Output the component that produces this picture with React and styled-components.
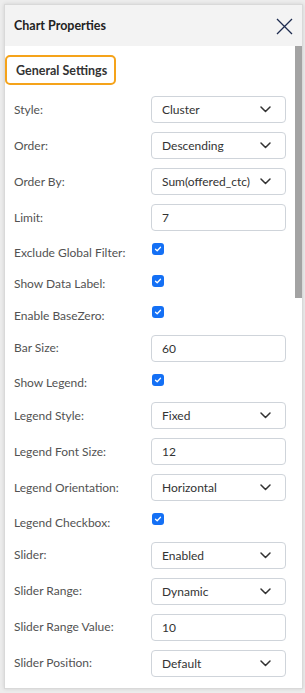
import React from 'react';
import styled, { createGlobalStyle } from 'styled-components';

const GlobalStyle = createGlobalStyle`
  html, body {
    margin: 0;
    padding: 0;
    background: #ededed;
    font-family: Lato, "Open Sans", sans-serif;
  }
`;

const Page = styled.div`
  padding: 4px 2px 4px 4px;
  height: 693px;
  box-sizing: border-box;
`;

const Panel = styled.div`
  display: flex;
  flex-direction: column;
  height: 100%;
  background: #fff;
  border: 1px solid #d9d9d9;
  box-shadow: 0 0 4px rgba(0, 0, 0, 0.12);
  box-sizing: border-box;
`;

const Header = styled.div`
  display: flex;
  align-items: center;
  justify-content: space-between;
  height: 41px;
  flex: 0 0 41px;
  padding: 0 9px 0 9px;
  background: #f3f3f3;
`;

const Title = styled.h1`
  margin: 0;
  font-size: 12.5px;
  font-weight: 700;
  color: #222;
`;

const CloseButton = styled.button`
  display: flex;
  align-items: center;
  justify-content: center;
  width: 18px;
  height: 18px;
  padding: 0;
  border: none;
  background: none;
  margin-top: 1px;
`;

const Main = styled.div`
  flex: 1;
  display: flex;
  min-height: 0;
`;

const Body = styled.div`
  flex: 1;
  overflow: hidden;
  padding-top: 9px;
`;

const ScrollRail = styled.div`
  flex: 0 0 7px;
  display: flex;
  flex-direction: column;
  background: #fff;
`;

const ScrollThumb = styled.div`
  height: 252px;
  background: #a3a3a3;
`;

const SectionTab = styled.div`
  display: inline-flex;
  align-items: center;
  height: 30px;
  padding: 0 7px 0 9px;
  border: 2px solid #f5a31a;
  border-radius: 5px;
  box-sizing: border-box;
  font-size: 12.5px;
  font-weight: 700;
  color: #333;
  margin-bottom: 11px;
`;

const Rows = styled.div`
  display: flex;
  flex-direction: column;
  gap: 9px;
  padding: 0 9px 0 9px;
`;

const Row = styled.div`
  display: grid;
  grid-template-columns: 137px 1fr;
  align-items: ${p => (p.$check ? 'start' : 'center')};
`;

const Label = styled.label`
  font-size: 12px;
  color: #525252;
  line-height: 20px;
  padding-top: ${p => (p.$check ? '2.5px' : '0')};
`;

const Field = styled.div`
  display: flex;
  align-items: center;
  justify-content: space-between;
  height: 27px;
  padding: 0 14px 0 10px;
  border: 1px solid #cfd4da;
  border-radius: 4px;
  box-sizing: border-box;
  font-size: 12px;
  color: #333;
  background: #fff;
`;

const CheckBox = styled.span`
  display: flex;
  align-items: center;
  justify-content: center;
  width: 12px;
  height: 12px;
  margin-top: 3px;
  margin-left: 1px;
  border-radius: 3px;
  background: #1470f5;
`;

const Chevron = () => (
  <svg width="11" height="7" viewBox="0 0 11 7" fill="none">
    <path d="M1 1l4.5 4.5L10 1" stroke="#333" strokeWidth="1.5" strokeLinecap="round" strokeLinejoin="round" />
  </svg>
);

const Tick = () => (
  <svg width="8" height="8" viewBox="0 0 8 8" fill="none">
    <path d="M1.5 4.2l1.7 1.6L6.5 2.3" stroke="#fff" strokeWidth="1.3" strokeLinecap="round" strokeLinejoin="round" />
  </svg>
);

const general = [
  { label: 'Style:', type: 'select', value: 'Cluster' },
  { label: 'Order:', type: 'select', value: 'Descending' },
  { label: 'Order By:', type: 'select', value: 'Sum(offered_ctc)' },
  { label: 'Limit:', type: 'input', value: '7' },
  { label: 'Exclude Global Filter:', type: 'check' },
  { label: 'Show Data Label:', type: 'check' },
  { label: 'Enable BaseZero:', type: 'check' },
  { label: 'Bar Size:', type: 'input', value: '60' },
  { label: 'Show Legend:', type: 'check' },
  { label: 'Legend Style:', type: 'select', value: 'Fixed' },
  { label: 'Legend Font Size:', type: 'input', value: '12' },
  { label: 'Legend Orientation:', type: 'select', value: 'Horizontal' },
  { label: 'Legend Checkbox:', type: 'check' },
  { label: 'Slider:', type: 'select', value: 'Enabled' },
  { label: 'Slider Range:', type: 'select', value: 'Dynamic' },
  { label: 'Slider Range Value:', type: 'input', value: '10' },
  { label: 'Slider Position:', type: 'select', value: 'Default' },
];

function SettingRow({ item }) {
  const isCheck = item.type === 'check';
  return (
    <Row $check={isCheck}>
      <Label $check={isCheck}>{item.label}</Label>
      {isCheck && (
        <CheckBox>
          <Tick />
        </CheckBox>
      )}
      {item.type === 'select' && (
        <Field>
          <span>{item.value}</span>
          <Chevron />
        </Field>
      )}
      {item.type === 'input' && (
        <Field>
          <span>{item.value}</span>
        </Field>
      )}
    </Row>
  );
}

export default function App() {
  return (
    <>
      <GlobalStyle />
      <Page>
        <Panel>
          <Header>
            <Title>Chart Properties</Title>
            <CloseButton aria-label="Close">
              <svg width="17" height="17" viewBox="0 0 17 17" fill="none">
                <path d="M1 1l15 15M16 1L1 16" stroke="#1d2b4f" strokeWidth="1.3" />
              </svg>
            </CloseButton>
          </Header>
          <Main>
            <Body>
              <SectionTab>General Settings</SectionTab>
              <Rows>
                {general.map(item => (
                  <SettingRow key={item.label} item={item} />
                ))}
              </Rows>
            </Body>
            <ScrollRail>
              <ScrollThumb />
            </ScrollRail>
          </Main>
        </Panel>
      </Page>
    </>
  );
}
